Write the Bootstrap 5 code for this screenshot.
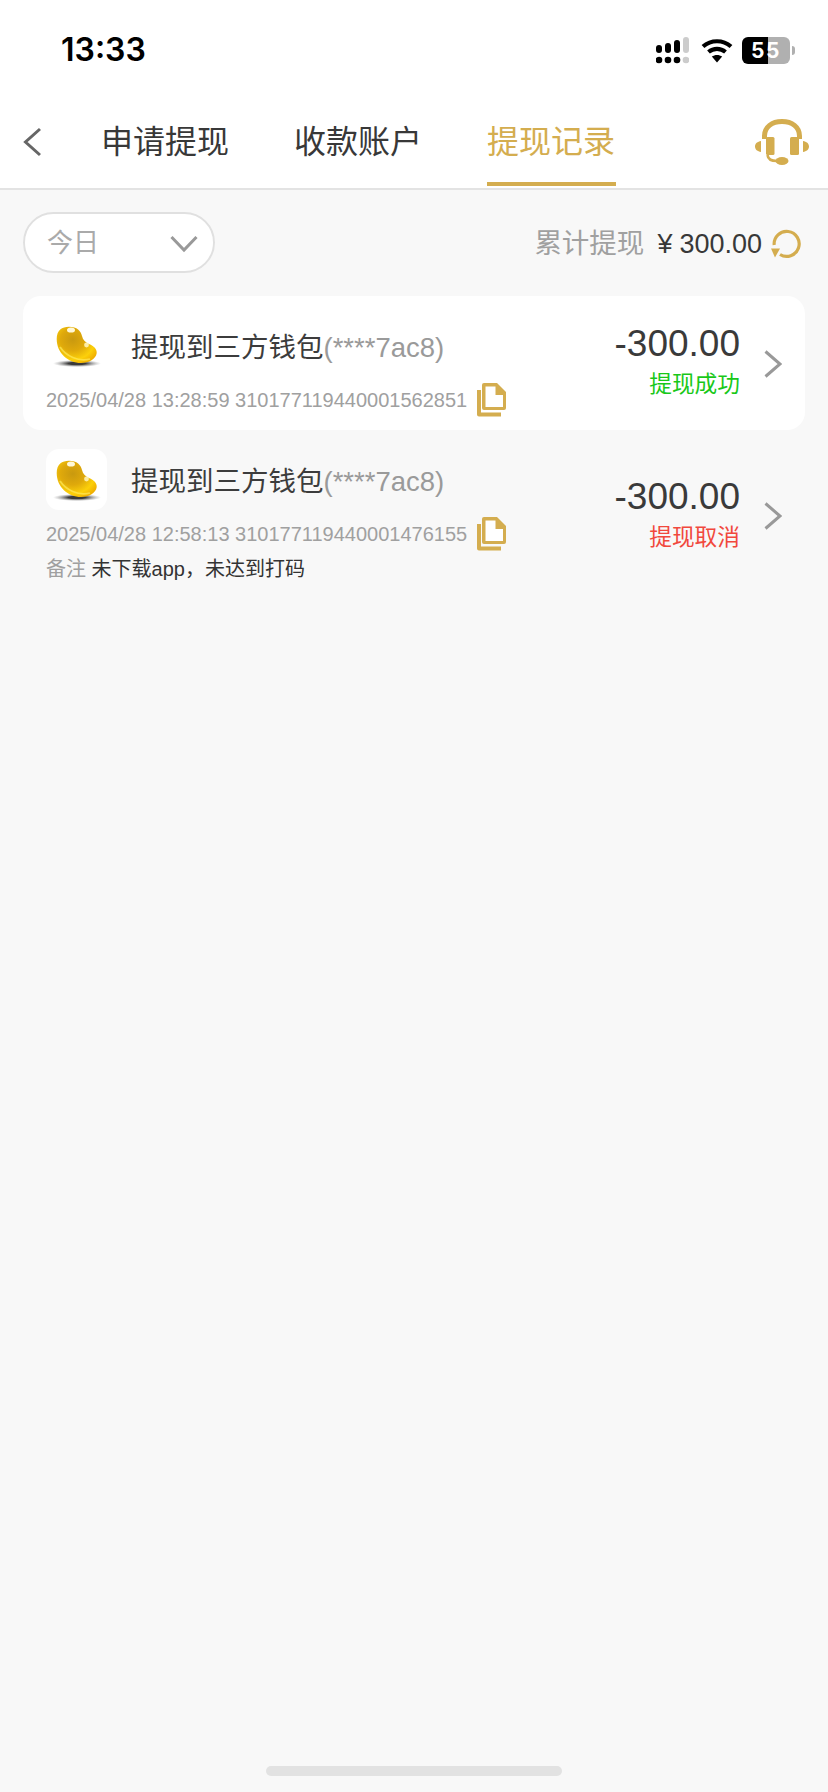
<!doctype html>
<html lang="zh">
<head>
<meta charset="utf-8">
<title>提现记录</title>
<link href="https://cdn.jsdelivr.net/npm/bootstrap@5.3.0/dist/css/bootstrap.min.css" rel="stylesheet">
<style>
  body { background: #f8f8f8; font-family: "Liberation Sans", "Noto Sans CJK SC", sans-serif; color: #333; height: 1792px; overflow: hidden; }
  .app-shell { height: 1792px; }
  .status-strip { height: 88px; background: #fff; padding: 12px 33px 0 61px; }
  .status-time { font-family: Inter, sans-serif; font-weight: 600; font-size: 32px; color: #000; line-height: 1; }
  .gap-signal { margin-left: 12px; margin-right: 9px; }
  .battery-box { width: 48px; height: 27px; border-radius: 6px; background: linear-gradient(90deg, #000 0 54%, #b0b0b0 54% 100%); color: #fff; font-family: Inter, sans-serif; font-weight: 700; font-size: 21px; line-height: 27px; text-align: center; letter-spacing: 1.5px; }
  .battery-cap { width: 3px; height: 9px; background: #b0b0b0; border-radius: 0 3px 3px 0; margin-left: 2px; }
  .tab-bar { height: 102px; background: #fff; border-bottom: 2px solid #e3e3e3; position: relative; padding-top: 18px; }
  .tab-back { width: 101px; height: 72px; padding-left: 22px; }
  .tab-item { font-size: 32px; color: #383838; line-height: 1; height: 72px; margin-right: 64px; width: 129px; white-space: nowrap; }
  .tab-item.is-active { color: #d4ad4f; height: 80px; border-bottom: 4px solid #d4ad4f; padding-bottom: 4px; }
  .agent-icon { position: absolute; right: 19px; top: 31px; }
  .filter-row { padding: 22px 27px 0 23px; height: 106px; }
  .range-pill { width: 192px; height: 61px; border: 2px solid #e0e0e0; border-radius: 31px; background: #fff; color: #aaa; font-size: 26px; padding: 2px 15px 0 22px; }
  .sum-box { height: 62px; padding-top: 2px; }
  .sum-label { font-size: 27.5px; color: #a0a0a0; }
  .sum-value { font-size: 27px; color: #383838; margin-left: 13px; }
  .sum-value i { font-style: normal; margin-right: 7px; }
  .refresh-icon { margin-left: 9px; }
  .record { margin: 0 23px; height: 134px; position: relative; padding: 19px 23px 0; border-radius: 18px; }
  .record.is-open { background: #fff; }
  .record.has-note { margin-top: 19px; height: 140px; padding-top: 0; }
  .coin { width: 61px; height: 61px; border-radius: 13px; background: #fff; flex: none; }
  .pay-title { font-size: 27.5px; color: #3c3c3c; margin-left: 24px; padding-top: 4px; line-height: 1; white-space: nowrap; }
  .pay-title span { color: #9a9a9a; }
  .meta-line { font-size: 20px; color: #a0a0a0; line-height: 1; height: 20px; margin-top: 14px; white-space: nowrap; }
  .copy-icon { margin: -7px 0 -7px 10px; flex: none; }
  .note-line { font-size: 20px; color: #a0a0a0; line-height: 1; margin-top: 15px; white-space: nowrap; }
  .note-line span { color: #333; }
  .sum-col { position: absolute; right: 65px; top: 29px; text-align: right; }
  .amount { font-size: 37px; line-height: 1; color: #3a3a3a; }
  .state-ok, .state-off { font-size: 22.7px; line-height: 1; margin-top: 11px; }
  .state-ok { color: #19c819; }
  .state-off { color: #f1483d; }
  .row-arrow { position: absolute; right: 23px; top: 54px; }
  .record.has-note .row-arrow { top: 53px; }
  .home-bar { position: absolute; left: 266px; top: 1766px; width: 296px; height: 10px; border-radius: 5px; background: #e2e2e2; }
</style>
</head>
<body>
<div class="app-shell position-relative">
  <div class="status-strip d-flex align-items-center justify-content-between">
    <div class="status-time">13:33</div>
    <div class="d-flex align-items-center">
      <!-- signal: two rows of dots, last column dimmed -->
      <svg width="33" height="27" viewBox="0 0 33 27">
        <g fill="#000">
          <rect x="0" y="8" width="6" height="8" rx="3"/><rect x="9" y="6" width="6" height="10" rx="3"/><rect x="18" y="3" width="6" height="13" rx="3"/>
          <circle cx="3" cy="23" r="3.3"/><circle cx="12" cy="23" r="3.3"/><circle cx="21" cy="23" r="3.3"/>
        </g>
        <g fill="#ccc"><rect x="27" y="0" width="6" height="16" rx="3"/><circle cx="30" cy="23" r="3.3"/></g>
      </svg>
      <!-- wifi arcs -->
      <svg class="gap-signal" width="32" height="25" viewBox="0 0 32 25">
        <path d="M2 8.5C10 1.5 22 1.5 30 8.5" fill="none" stroke="#000" stroke-width="4.2"/>
        <path d="M7.5 14C12.5 9.8 19.5 9.8 24.5 14" fill="none" stroke="#000" stroke-width="4.2"/>
        <path d="M16 24.5L10.8 18.6C13.8 16.4 18.2 16.4 21.2 18.6Z" fill="#000"/>
      </svg>
      <div class="d-flex align-items-center">
        <div class="battery-box">55</div>
        <div class="battery-cap"></div>
      </div>
    </div>
  </div>

  <div class="tab-bar d-flex align-items-start">
    <div class="tab-back d-flex align-items-center">
      <svg width="20" height="30" viewBox="0 0 20 30"><path d="M18 2L3.5 15L18 28" fill="none" stroke="#666" stroke-width="3"/></svg>
    </div>
    <div class="tab-item d-flex align-items-center">申请提现</div>
    <div class="tab-item d-flex align-items-center">收款账户</div>
    <div class="tab-item is-active d-flex align-items-center">提现记录</div>
    <svg class="agent-icon" width="54" height="46" viewBox="0 0 54 46">
      <path d="M9.5 20V17C9.5 8 17 2.5 27 2.5S44.5 8 44.5 17V20" fill="none" stroke="#d4ad4f" stroke-width="5"/>
      <rect x="11" y="18" width="8.5" height="18" rx="1.5" fill="#d4ad4f"/>
      <rect x="35" y="18" width="9" height="18" rx="1.5" fill="#d4ad4f"/>
      <path d="M6 22V33C2.5 32.5 0 30.5 0 27.5S2.5 22.5 6 22ZM48 22V33C51.5 32.5 54 30.5 54 27.5S51.5 22.5 48 22Z" fill="#d4ad4f"/>
      <path d="M12.5 36C13 40.5 16 42 22 42" fill="none" stroke="#d4ad4f" stroke-width="2.6"/>
      <ellipse cx="27" cy="42" rx="6.5" ry="4" fill="#d4ad4f"/>
    </svg>
  </div>

  <div class="filter-row d-flex justify-content-between align-items-start">
    <div class="range-pill d-flex align-items-center justify-content-between">
      <span>今日</span>
      <svg width="28" height="18" viewBox="0 0 28 18"><path d="M1.5 2L14 15L26.5 2" fill="none" stroke="#999" stroke-width="3"/></svg>
    </div>
    <div class="sum-box d-flex align-items-center">
      <span class="sum-label">累计提现</span>
      <span class="sum-value"><i>¥</i>300.00</span>
      <svg class="refresh-icon" width="30" height="30" viewBox="0 0 30 30">
        <path d="M3.2 16A12.5 12.5 0 1 1 9 25.5" fill="none" stroke="#d4ad4f" stroke-width="3.2"/>
        <path d="M0 19.5H9L4 28.5Z" fill="#d4ad4f"/>
      </svg>
    </div>
  </div>

  <!-- gold bean artwork shared by both rows -->
  <svg width="0" height="0" class="position-absolute">
    <defs>
      <radialGradient id="beanFill" cx=".4" cy=".36" r=".72">
        <stop offset="0" stop-color="#c9990f"/><stop offset=".42" stop-color="#dfa90b"/><stop offset=".76" stop-color="#fcd00a"/><stop offset="1" stop-color="#f0ae00"/>
      </radialGradient>
      <radialGradient id="beanShadow"><stop offset=".35" stop-color="#3a3a3a"/><stop offset="1" stop-color="#999" stop-opacity="0"/></radialGradient>
      <symbol id="goldBean" viewBox="0 0 61 61">
        <ellipse cx="31" cy="48.5" rx="24" ry="3.6" fill="url(#beanShadow)"/>
        <path d="M10.7 24C10.7 15 16 11.7 23 11.7C31 11.7 35 16 36 21C37 25 39 27 43 29C48 31 51 34 50.7 38C50 44 43 48 35 48C22 48 10.7 38 10.7 24Z" fill="url(#beanFill)"/>
        <ellipse cx="25" cy="15" rx="4" ry="2.6" fill="#fff8d8"/>
        <circle cx="40.5" cy="30" r="2.4" fill="#fff3b8" opacity=".9"/>
        <path d="M14 32C20 41 32 47 44 44" fill="none" stroke="#ffe95a" stroke-width="1.8" opacity=".7"/>
      </symbol>
      <symbol id="copyDoc" viewBox="0 0 30 34">
        <path d="M0 7H4V29.5H24V33.5H2Q0 33.5 0 31.5Z" fill="#d4ad4f"/>
        <path d="M7 0H20L29 9V25Q29 27 27 27H7Q5 27 5 25V2Q5 0 7 0Z" fill="#d4ad4f"/>
        <path d="M8.5 3.5H18.5V12H26V24H8.5Z" fill="#fff"/>
      </symbol>
    </defs>
  </svg>

  <div class="record is-open">
    <div class="d-flex align-items-center">
      <div class="coin"><svg width="61" height="61"><use href="#goldBean"/></svg></div>
      <div class="pay-title">提现到三方钱包<span>(****7ac8)</span></div>
    </div>
    <div class="meta-line d-flex align-items-center">2025/04/28 13:28:59 310177119440001562851
      <svg class="copy-icon" width="30" height="34"><use href="#copyDoc"/></svg>
    </div>
    <div class="sum-col">
      <div class="amount">-300.00</div>
      <div class="state-ok">提现成功</div>
    </div>
    <svg class="row-arrow" width="18" height="28" viewBox="0 0 18 28"><path d="M1.5 1.5L16 14L1.5 26.5" fill="none" stroke="#999" stroke-width="3"/></svg>
  </div>

  <div class="record has-note">
    <div class="d-flex align-items-center">
      <div class="coin"><svg width="61" height="61"><use href="#goldBean"/></svg></div>
      <div class="pay-title">提现到三方钱包<span>(****7ac8)</span></div>
    </div>
    <div class="meta-line d-flex align-items-center">2025/04/28 12:58:13 310177119440001476155
      <svg class="copy-icon" width="30" height="34"><use href="#copyDoc"/></svg>
    </div>
    <div class="note-line">备注 <span>未下载app，未达到打码</span></div>
    <div class="sum-col">
      <div class="amount">-300.00</div>
      <div class="state-off">提现取消</div>
    </div>
    <svg class="row-arrow" width="18" height="28" viewBox="0 0 18 28"><path d="M1.5 1.5L16 14L1.5 26.5" fill="none" stroke="#999" stroke-width="3"/></svg>
  </div>

  <div class="home-bar"></div>
</div>
<script src="https://cdn.jsdelivr.net/npm/bootstrap@5.3.0/dist/js/bootstrap.bundle.min.js"></script>
</body>
</html>
